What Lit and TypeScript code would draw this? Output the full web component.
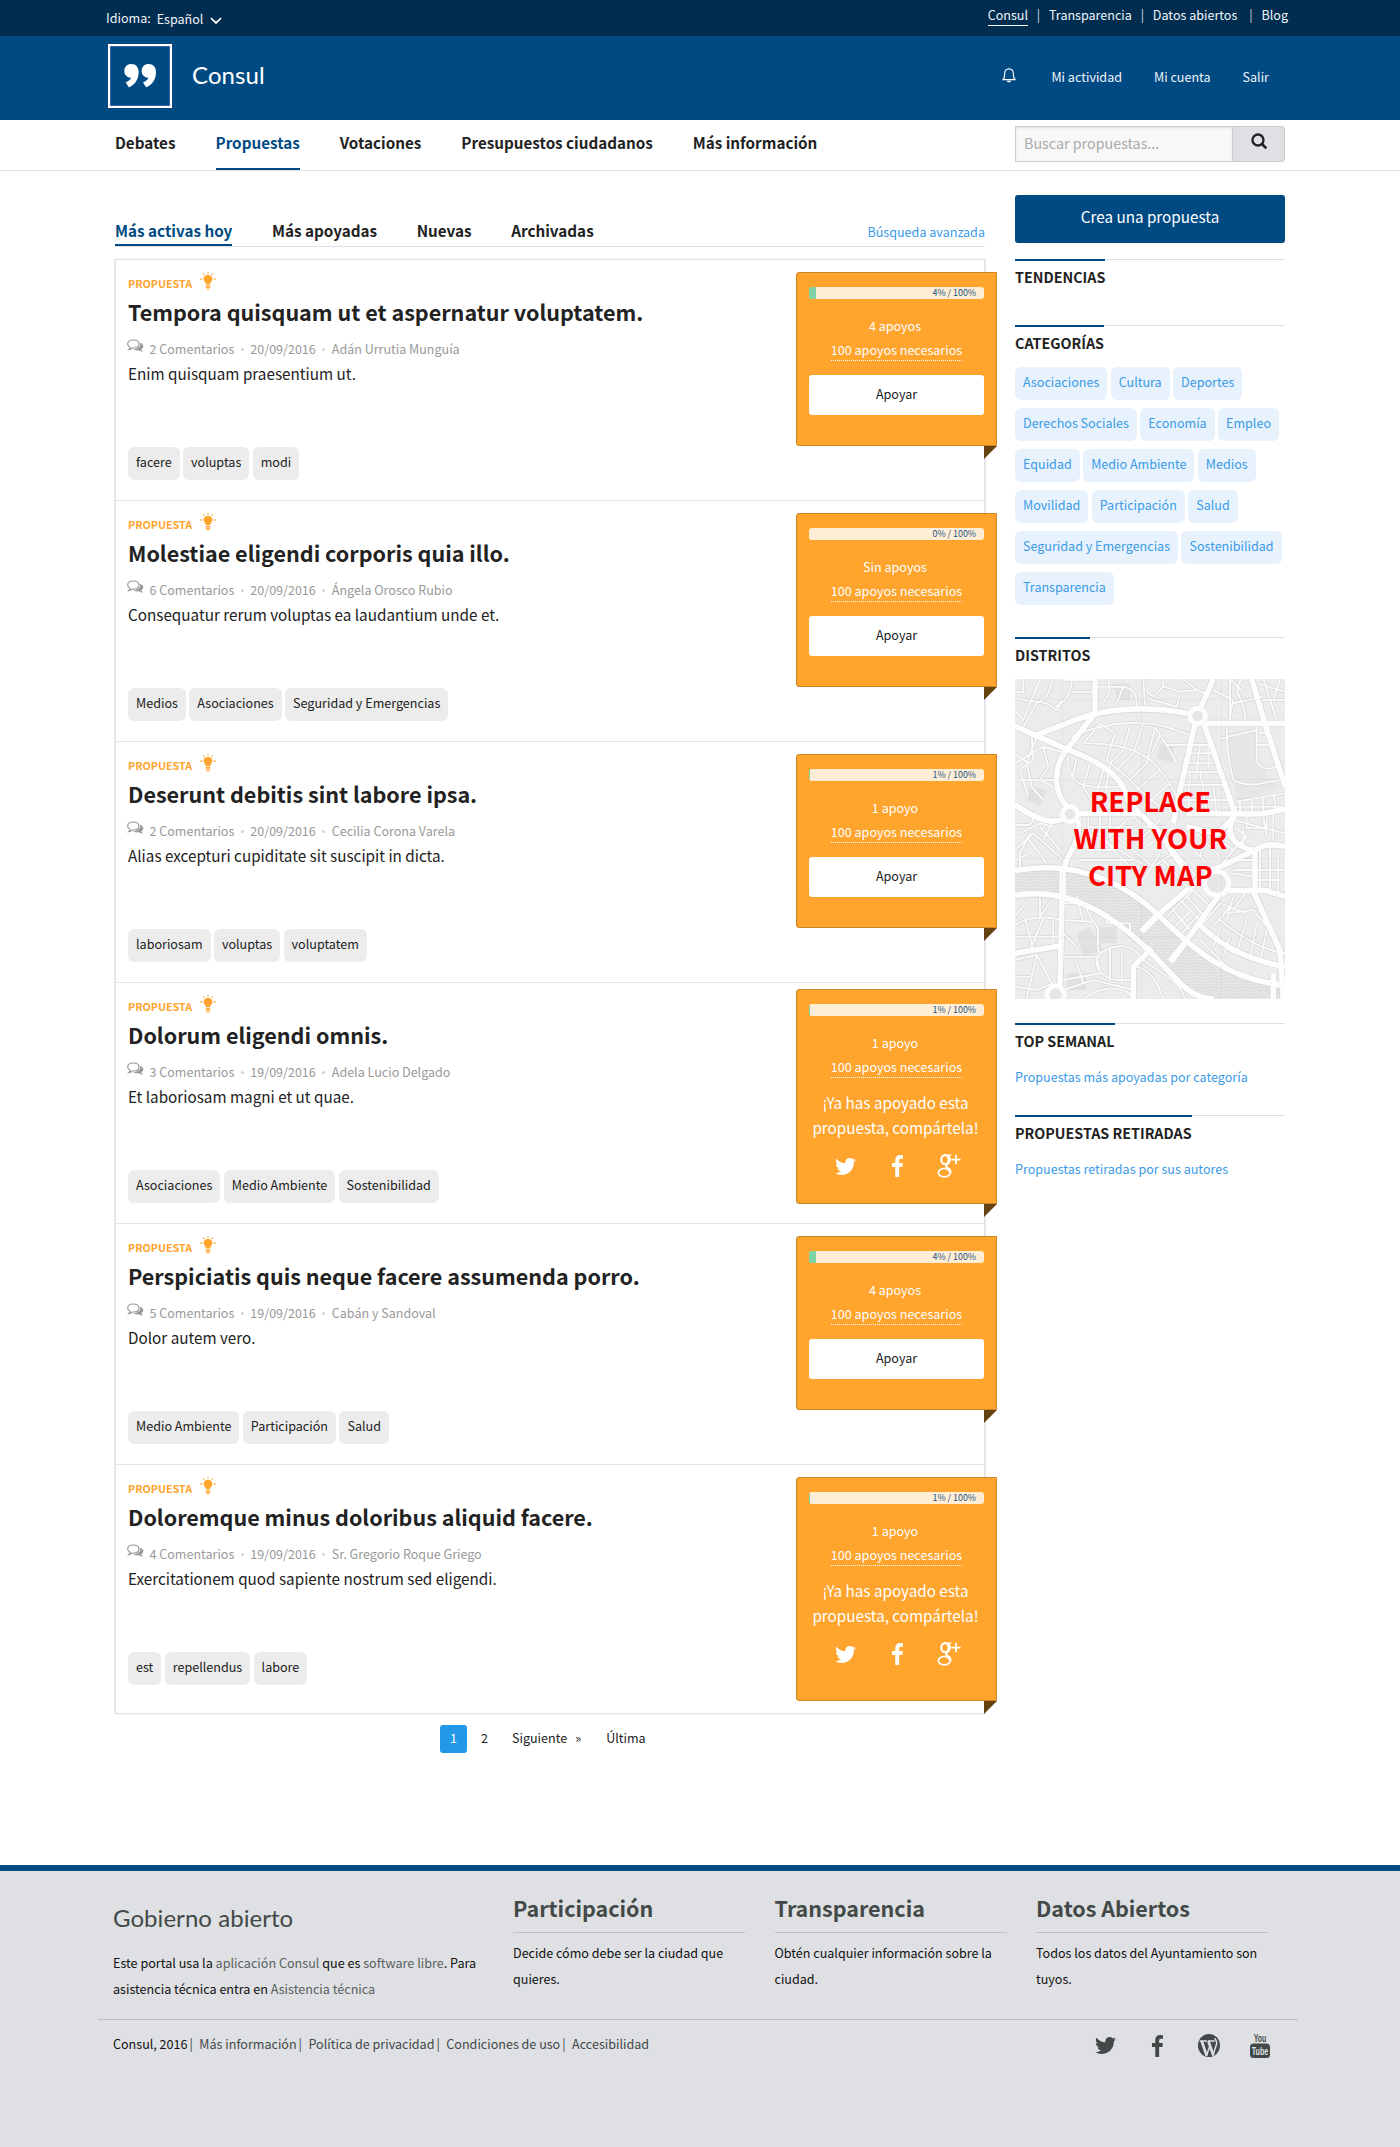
import { LitElement, html, css, svg } from "lit";
import { customElement, property } from "lit/decorators.js";

interface Proposal {
  title: string;
  comments: number;
  date: string;
  author: string;
  summary: string;
  tags: string[];
  votes: string;
  percent: number;
  voted?: "short" | "tall";
}

const proposals: Proposal[] = [
  { title: "Tempora quisquam ut et aspernatur voluptatem.", comments: 2, date: "20/09/2016", author: "Adán Urrutia Munguía", summary: "Enim quisquam praesentium ut.", tags: ["facere", "voluptas", "modi"], votes: "4 apoyos", percent: 4 },
  { title: "Molestiae eligendi corporis quia illo.", comments: 6, date: "20/09/2016", author: "Ángela Orosco Rubio", summary: "Consequatur rerum voluptas ea laudantium unde et.", tags: ["Medios", "Asociaciones", "Seguridad y Emergencias"], votes: "Sin apoyos", percent: 0 },
  { title: "Deserunt debitis sint labore ipsa.", comments: 2, date: "20/09/2016", author: "Cecilia Corona Varela", summary: "Alias excepturi cupiditate sit suscipit in dicta.", tags: ["laboriosam", "voluptas", "voluptatem"], votes: "1 apoyo", percent: 1 },
  { title: "Dolorum eligendi omnis.", comments: 3, date: "19/09/2016", author: "Adela Lucio Delgado", summary: "Et laboriosam magni et ut quae.", tags: ["Asociaciones", "Medio Ambiente", "Sostenibilidad"], votes: "1 apoyo", percent: 1, voted: "short" },
  { title: "Perspiciatis quis neque facere assumenda porro.", comments: 5, date: "19/09/2016", author: "Cabán y Sandoval", summary: "Dolor autem vero.", tags: ["Medio Ambiente", "Participación", "Salud"], votes: "4 apoyos", percent: 4 },
  { title: "Doloremque minus doloribus aliquid facere.", comments: 4, date: "19/09/2016", author: "Sr. Gregorio Roque Griego", summary: "Exercitationem quod sapiente nostrum sed eligendi.", tags: ["est", "repellendus", "labore"], votes: "1 apoyo", percent: 1, voted: "tall" },
];

const categories = [
  ["Asociaciones", "Cultura", "Deportes"],
  ["Derechos Sociales", "Economía", "Empleo"],
  ["Equidad", "Medio Ambiente", "Medios"],
  ["Movilidad", "Participación", "Salud"],
  ["Seguridad y Emergencias", "Sostenibilidad"],
  ["Transparencia"],
];

const twitter = (w: number, h: number) => html`<svg width=${w} height=${h} viewBox="108 256 1576 1280" preserveAspectRatio="none" fill="currentColor"><path d="M1684 408q-67 98-162 167 1 14 1 42 0 130-38 259.500t-115.500 248.500-184.500 210.500-258 146-323 54.500q-271 0-496-145 35 4 78 4 225 0 401-138-105-2-188-64.500t-114-159.500q33 5 61 5 43 0 85-11-112-23-185.500-111.500t-73.500-205.500v-4q68 38 146 41-66-44-105-115t-39-154q0-88 44-163 121 149 294.500 238.500t371.500 99.500q-8-38-8-74 0-134 94.500-228.500t228.500-94.500q140 0 236 102 109-21 205-78-37 115-142 178 93-10 186-50z"/></svg>`;

const facebook = (w: number, h: number) => html`<svg width=${w} height=${h} viewBox="479 0 864 1664" preserveAspectRatio="none" fill="currentColor"><path d="M1343 12v264h-157q-86 0-116 36t-30 108v189h293l-39 296h-254v759h-306v-759h-255v-296h255v-218q0-186 104-288.500t277-102.500q147 0 228 12z"/></svg>`;

const googlePlus = html`<svg width="24" height="24" viewBox="0 0 72 72" fill="none" stroke="currentColor"><ellipse cx="24" cy="17" rx="11" ry="13.500" stroke-width="6.500"/><path d="M24 3.500H43" stroke-width="4"/><path d="M33 6c9 7 6 19-1 24-6 4-7 8 0 12 4 2 7 5 8 9" stroke-width="6"/><ellipse cx="22" cy="56" rx="18" ry="12.500" stroke-width="5"/><path d="M40 56c0-8-6-11-10-13" stroke-width="8"/><path d="M43 17h28M57 3v28" stroke-width="5.500"/></svg>`;

const wordpress = html`<svg width="22" height="23" viewBox="0 0 66 66" preserveAspectRatio="none"><circle cx="33" cy="33" r="33" fill="currentColor"/><g fill="none" stroke="#dee0e3"><path d="M5 20H27M30 20H50" stroke-width="4"/><path d="M11 20L26 62M31 20L46 61" stroke-width="8"/><path d="M25 64L37 30M44 64L56 28C58 22 52 18 51 12" stroke-width="4.500"/></g></svg>`;

const youtube = html`<svg class="yt" width="20" height="25" viewBox="0 0 20 25"><text x="10" y="9" textLength="12.500" lengthAdjust="spacingAndGlyphs" fill="currentColor">You</text><rect x="0" y="10.500" width="20" height="14.500" rx="3.500" fill="currentColor"/><text x="10" y="22" textLength="16.500" lengthAdjust="spacingAndGlyphs" fill="#dee0e3">Tube</text></svg>`;

const bulb = html`<svg class="bulb" width="16" height="18" viewBox="0 0 48 54"><path d="M24 9c-9 0-14 6-13 13 1 7 6 8 6.500 15h13c.5-7 5.500-8 6.500-15 1-7-4-13-13-13z" fill="currentColor"/><path d="M17 41h14M17.500 46h13M20 51h8" stroke="currentColor" stroke-width="3.500"/><path d="M24 0v6M9 3l5 6M39 3l-5 6M0 21h8M40 21h8" stroke="currentColor" stroke-width="3" fill="none"/></svg>`;

const bubbles = html`<svg class="bubbles" width="17" height="14" viewBox="0 0 51 42"><path d="M19 3C9 3 2 8 2 15c0 5 3 8 7 10-1 3-2 5-4 7 5-1 8-3 11-5h3c10 0 17-5 17-12S29 3 19 3z" fill="none" stroke="currentColor" stroke-width="3.500"/><path d="M39 11c6 2 10 6 10 11 0 4-3 7-6 9 1 3 2 5 5 7-5 0-9-2-12-4-8 1-14-1-18-4 12 1 26-7 21-19z" fill="currentColor"/></svg>`;

/* Street network of the district map: wide avenues first, side streets after. */
const avenues = [
  "M45 318L200 388C290 420 370 465 385 545L480 640L560 760",
  "M110 345L200 310C330 255 460 260 571 282",
  "M285 177V280L195 395C155 455 165 520 203 562",
  "M640 177L600 268", "M614 310H855", "M585 312L538 520L520 610", "M612 312L705 580",
  "M755 177L795 310L855 500", "M45 555C100 590 140 615 190 598", "M232 580H420M560 580H640L705 582H780L855 568",
  "M235 598C240 680 205 690 192 745", "M45 752C190 725 340 760 470 880C570 980 680 1080 855 1096",
  "M45 826C200 800 330 880 440 985C520 1060 560 1137 640 1137", "M188 745L180 1100",
  "M705 582C670 640 700 680 765 692V815", "M765 692C790 670 830 672 855 680", "M470 888L620 760L765 690",
  "M515 1025L600 905L665 815", "M685 812H800L855 830M760 815L840 990L850 1137", "M590 905C650 970 740 1020 855 1040",
  "M45 1000L180 978", "M400 1137V1040L455 985", "M560 620L650 640L705 590", "M820 1137V1060",
];
const streets = [
  "M70 177V215H45M120 177L70 300L45 270M45 235L140 250L170 270L185 240M160 177L140 230L110 250L70 320",
  "M215 177C215 230 190 250 165 260M185 180H285M215 215H285M290 200H370C420 210 405 245 412 260M325 177L330 215L310 250M370 200L350 250",
  "M430 177L435 255M490 177V200L460 230L440 215M490 200L540 215L590 210L625 225M440 235L530 260L540 225M550 177L590 210M690 177L730 215M700 250L790 230M690 177V300M640 210L700 240L690 290M725 177C690 220 740 240 735 300",
  "M775 190L855 215M785 240H855M790 177L830 300M840 177L820 240",
  "M110 350L80 430L95 500L130 540M45 430L130 380L200 400M95 350L100 420L60 450L85 530M130 380L145 440L120 480L160 500M60 480H165M45 400L85 430",
  "M215 350C280 320 350 305 430 310C500 310 540 340 575 345M250 370C330 370 430 380 480 450C520 500 540 540 545 590M250 370L300 310L345 340M345 340L320 420L380 470M390 320L370 390L330 430M430 310L400 400L350 450M465 320L440 430L390 480M465 320L500 375H560M500 375L530 430M480 345L455 400M480 450L410 510M510 490L430 560M380 470L430 520L480 560",
  "M205 410C200 470 230 500 285 500H330M230 415L215 480M270 430L250 500L280 550M310 450L290 520M330 430L310 560M285 500L370 500",
  "M570 375H630M565 400H640M560 430H640M600 375L590 455M625 380V450M550 455H660M545 495H680M570 455L565 580M600 455L620 580M640 500L650 580M540 540H690",
  "M665 355L770 330M680 320C680 400 690 440 700 480C760 510 800 480 850 480M770 320V420C780 450 810 450 830 440M780 340H810M770 375H815M705 545L855 520M720 540V580M755 535V582M790 530V578M705 560H850M740 580V625H800V582M820 525L830 575",
  "M45 615H90L110 580M60 640L120 610L160 620M45 690L100 640L190 720M80 650L140 730M45 720L90 700M120 620L180 690M155 610L130 660M90 640L60 700V740",
  "M265 590V640L340 680L440 740M300 590V660M330 590V650L380 600M265 620H400M250 660L300 640L350 700L390 740M260 690H350M240 720H400M350 650L460 740M400 590L430 620H500M430 650L480 600M440 680L520 620M460 740L520 700L560 640M490 720L560 800M520 690L590 770M550 660L620 730M590 640L660 710M620 640L600 710M480 700L430 780",
  "M700 600L855 640M730 620V680M790 590L800 650M820 580V660M705 620L740 650L690 700M640 650L700 690L660 740M600 770L640 740M690 720H760M700 750H850M780 690V810M810 680V820M835 700V820M770 780H850M690 760L765 770",
  "M500 890L545 845L600 900M545 845L580 810L630 860M520 870L570 930M560 830L610 885M525 920L575 870M545 940L600 880M610 910L660 850L740 880M640 920L690 860M620 930L700 1000M660 900C720 950 790 990 855 1000M680 880L760 870L810 930M700 830L680 900M735 820L700 870M660 930L640 980M690 950L670 1010M740 900L710 1000M770 910L750 1020M800 930L780 1030M600 960L680 1040",
  "M45 915C100 880 160 895 190 900L280 905C310 930 280 980 300 1000C340 970 400 970 420 1010M120 835V890M85 840L45 890M155 840L120 890M75 895L100 990M130 895L90 990M160 900V980M45 950H180M190 850H250L280 905M230 830L250 905M325 880L320 910H390V950M190 1010H290L300 1060L190 1080M300 1000C270 1040 310 1090 390 1080M190 940L230 980M330 985V1080M365 1000V1080M45 1020L110 1005L160 1100M110 1005L80 1137M45 1070H90M190 1110L280 1080L400 1110M230 1030L250 1090M45 1100L110 1110L160 1090",
  "M410 1040C460 1050 480 1110 490 1137M430 1020C480 1060 540 1080 555 1137M250 1137C310 1090 380 1100 400 1137",
];
const river = "M45 752C190 725 340 760 470 880C570 980 680 1080 855 1096V1137H640C560 1137 520 1060 440 985C330 880 200 800 45 826Z";

@customElement("city-map")
class CityMap extends LitElement {
  static styles = css`
    :host { display: block; height: 320px; }
    svg { display: block; }
    text { font: 700 82px "Noto Sans CJK JP", sans-serif; fill: #f00; text-anchor: middle; }
  `;
  render() {
    return html`<svg width="270" height="320" viewBox="45 177 810 960">
      <defs>
        <pattern id="waves" width="16" height="9" patternUnits="userSpaceOnUse"><path d="M0 5q4-5 8 0t8 0" fill="none" stroke="#cfcfcf" stroke-width="2"/></pattern>
      </defs>
      <rect x="45" y="177" width="810" height="960" fill="#ececec"/>
      <path d="M680 340L765 325V430L840 500L710 545Z" fill="#e6e6e6"/>
      <path d="M230 940l40-20 40 70-60 20zM200 1060h60v50h-60zM480 370l40 10v50l-50-15zM340 190h50v50h-40zM90 500l50 10-20 50-40-20zM300 920h50v50h-50z" fill="#e1e1e1"/>
      <path d=${river} fill="#e8e8e8"/>
      <path d=${river} fill="url(#waves)"/>
      <g fill="none" stroke="#d2d2d2" stroke-width="9.500">${streets.map((d) => svg`<path d=${d}/>`)}</g>
      <g fill="none" stroke="#d4d4d4" stroke-width="21">${avenues.map((d) => svg`<path d=${d}/>`)}</g>
      <g fill="none" stroke="#fafafa" stroke-width="6">${streets.map((d) => svg`<path d=${d}/>`)}</g>
      <path d="M425 935L478 880M510 1025L550 975M188 740V830" stroke="#fdfdfd" stroke-width="18"/>
      <g fill="none" stroke="#fdfdfd" stroke-width="17">${avenues.map((d) => svg`<path d=${d}/>`)}</g>
      <g fill="#e6e6e6" stroke="#fdfdfd" stroke-width="14"><circle cx="593" cy="288" r="23"/><circle cx="210" cy="582" r="23"/><circle cx="650" cy="790" r="36"/><circle cx="167" cy="1124" r="26"/></g>
      <path d="M187 177V1137M425 177V1137M664 177V1137M45 238H855M45 478H855M45 715H855M45 952H855" stroke="#000" stroke-opacity=".06" stroke-width="2"/>
      <text x="451" y="577">REPLACE</text>
      <text x="451" y="687">WITH YOUR</text>
      <text x="451" y="797">CITY MAP</text>
    </svg>`;
  }
}

@customElement("support-card")
class SupportCard extends LitElement {
  @property({ attribute: false }) proposal!: Proposal;
  static styles = css`
    :host { display: block; }
    .card { position: relative; box-sizing: border-box; width: 201px; height: 174px; border: 1px solid #cc8425; border-radius: 3px 0 0 3px; background: #ffa42d; padding: 14px 12px 0; color: #fff; text-align: center; font-size: 12.550px; line-height: 24px; }
    .card.short { height: 215px; }
    .card.tall { height: 224px; }
    .card::after { content: ""; position: absolute; right: -1px; top: 100%; margin-top: 1px; border-top: 13px solid #664212; border-right: 13px solid transparent; }
    .bar { display: flex; height: 12px; border-radius: 3px; background: #ffedd5; overflow: hidden; }
    .fill { background: #7fd3a6; height: 12px; }
    .label { margin-left: auto; padding-right: 8px; font-size: 8.900px; line-height: 11px; color: #1b5483; }
    .votes { margin-top: 15px; padding-right: 3px; }
    .needed { display: inline-block; box-sizing: border-box; height: 23px; border-bottom: 1px dotted #fff; }
    .needed-row { height: 24px; display: flex; justify-content: center; }
    .button { margin-top: 13px; height: 40px; line-height: 37px; border-radius: 3px; background: #fff; color: #222; }
    .share { margin: 11px -5px 0 -7px; font-size: 15.240px; line-height: 24.500px; }
    .icons { display: flex; height: 24px; margin-top: 15px; align-items: center; }
    .icons svg { display: block; }
    .i1 { margin-left: 26px; }
    .i2 { margin-left: 36px; }
    .i3 { margin-left: 34px; }
  `;
  render() {
    const p = this.proposal;
    return html`<div class="card ${p.voted ?? ""}">
      <div class="bar"><div class="fill" style="width:${p.percent === 4 ? 7 : p.percent ? 0.6 : 0}px"></div><span class="label">${p.percent}% / 100%</span></div>
      <div class="votes">${p.votes}</div>
      <div class="needed-row"><span class="needed">100 apoyos necesarios</span></div>
      ${p.voted
        ? html`<div class="share">¡Ya has apoyado esta<br />propuesta, compártela!</div>
            <div class="icons"><span class="i1">${twitter(21, 17)}</span><span class="i2">${facebook(11, 22)}</span><span class="i3">${googlePlus}</span></div>`
        : html`<div class="button">Apoyar</div>`}
    </div>`;
  }
}

@customElement("proposal-item")
class ProposalItem extends LitElement {
  @property({ attribute: false }) proposal!: Proposal;
  static styles = css`
    :host { display: block; }
    .item { display: flex; justify-content: space-between; box-sizing: border-box; height: 241px; border-bottom: 1px solid #e3e4e7; padding: 0 0 0 12px; }
    .item.tall { height: 249px; }
    .text { padding-top: 13px; }
    .side { margin: 12px -13px 0 0; }
    .short .side { margin-top: 6px; }
    .kind { display: flex; align-items: center; height: 20px; color: #ffa42d; font-weight: 700; font-size: 10.750px; }
    .bulb { margin: -4px 0 0 8px; }
    .title { margin: 4px 0 0; font-size: 21.550px; line-height: 30px; font-weight: 700; color: #222; white-space: nowrap; }
    .meta { display: flex; align-items: center; height: 20px; margin-top: 11px; font-size: 12.540px; color: #999; }
    .bubbles { margin: -4px 5.500px 0 -1px; }
    .dot { width: 3px; height: 3px; border-radius: 50%; background: #d2d2d2; margin: 2px 6.500px 0; }
    .summary { margin-top: 3px; line-height: 24px; font-size: 15.260px; color: #222; }
    .tags { display: flex; gap: 3.400px; margin-top: 62px; }
    .tag { height: 29px; line-height: 29px; padding: 0 8px 4px; border-radius: 6px; background: #ececec; font-size: 12.570px; color: #222; }
  `;
  render() {
    const p = this.proposal;
    return html`<div class="item ${p.voted ?? ""}">
      <div class="text">
        <div class="kind">PROPUESTA ${bulb}</div>
        <h3 class="title">${p.title}</h3>
        <div class="meta">${bubbles}<span>${p.comments} Comentarios</span><i class="dot"></i><span>${p.date}</span><i class="dot"></i><span>${p.author}</span></div>
        <div class="summary">${p.summary}</div>
        <div class="tags">${p.tags.map((t) => html`<span class="tag">${t}</span>`)}</div>
      </div>
      <support-card class="side" .proposal=${p}></support-card>
    </div>`;
  }
}

@customElement("app-root")
class AppRoot extends LitElement {
  static styles = css`
    :host { display: block; width: 1400px; background: #fff; color: #222; font-family: "Noto Sans CJK JP", "Source Sans Pro", sans-serif; font-size: 12.550px; }
    svg { display: block; }
    .top { display: flex; justify-content: space-between; height: 36px; box-sizing: border-box; padding: 0 112px 0 106px; background: #002d50; color: #f2f5f8; }
    .lang { display: flex; line-height: 20px; padding-top: 8px; }
    .lang .value { margin: 1px 7px 0 6px; }
    .lang svg { margin-top: 9px; }
    .sites { display: flex; padding-top: 5px; line-height: 20px; }
    .current { height: 20px; border-bottom: 1px solid #fff; }
    .bar-sep { margin: 0 8.800px; opacity: .8; }
    .bar-sep.wide { margin-left: 12px; }
    .header { display: flex; align-items: flex-start; justify-content: space-between; height: 84px; box-sizing: border-box; padding: 8px 131px 0 108px; background: #004a83; color: #fff; }
    .brand { display: flex; }
    .brand-name { margin-left: 20px; line-height: 62px; font-family: Lato, sans-serif; font-size: 24px; letter-spacing: .1px; }
    .account { display: flex; line-height: 20px; padding-top: 23px; color: #f0f5f9; }
    .account svg { margin: 0 35px 0 0; }
    .account span + span { margin-left: 32px; }
    .nav { display: flex; justify-content: space-between; height: 50px; border-bottom: 1px solid #dee0e3; padding: 0 115px; font-size: 14.320px; }
    .menu { display: flex; gap: 40px; font-weight: 700; line-height: 44px; font-size: 15.230px; }
    .menu span { box-sizing: border-box; height: 50px; }
    .menu .on { color: #004a83; border-bottom: 2px solid #004a83; }
    .search { display: flex; width: 270px; height: 36px; margin-top: 6px; box-sizing: border-box; }
    .field { width: 217px; box-sizing: border-box; border: 1px solid #ccc; border-right: 0; background: #f8f8f8; padding-left: 8px; line-height: 32px; color: #aaa; box-shadow: inset 0 1px 2px rgba(0,0,0,.1); }
    .go { width: 53px; box-sizing: border-box; border: 1px solid #ccc; border-radius: 0 3px 3px 0; background: #dee0e3; padding: 6px 0 0 17.500px; }
    .body { display: grid; grid-template-columns: 870px 270px; column-gap: 30px; padding: 0 115px; height: 1694px; box-sizing: border-box; }
    .tabs { display: flex; margin-top: 45px; height: 30px; border-bottom: 1px solid #dee0e3; line-height: 29px; font-weight: 700; font-size: 15.260px; }
    .tabs span { height: 28px; margin-right: 39.600px; }
    .tabs .on { color: #004a83; border-bottom: 2px solid #004a83; }
    .tabs .link { margin: 1px 0 0 auto; font-weight: 400; font-size: 12.590px; }
    .link { color: #3a9be8; }
    .list { margin-top: 12px; border: 1px solid #dee0e3; border-bottom: 0; box-shadow: -1px 0 1px #eceef1, 1px 0 1px #eceef1; box-sizing: border-box; }
    .pages { display: flex; margin: 11px 0 0 325px; height: 28px; line-height: 26px; }
    .page { background: #2199e8; color: #fff; width: 27px; text-align: center; border-radius: 3px; }
    .p2 { margin-left: 14px; }
    .pn { margin-left: 24px; }
    .pr { margin-left: 8px; }
    .pl { margin-left: 25px; }
    .side { padding-top: 24px; }
    .create { height: 48px; line-height: 43px; background: #004a83; color: #fff; text-align: center; border-radius: 3px; font-size: 15.240px; margin-bottom: 16px; }
    .block { border-top: 1px solid #dee0e3; }
    .head { display: inline-block; margin-top: -1px; border-top: 2px solid #004a83; font-size: 14.310px; font-weight: 700; line-height: 24px; padding-top: 4px; height: 36px; vertical-align: top; text-transform: uppercase; }
    .b1 { height: 65px; } .b2 { height: 311px; } .b3 { height: 385px; } .b4 { height: 91px; }
    .rows { display: flex; flex-direction: column; gap: 8px; }
    .row { display: flex; gap: 3.400px; }
    .cat { height: 30px; line-height: 30px; padding: 0 8px 3px; border-radius: 6px; background: #e7f2fc; color: #3a9be8; font-size: 12.560px; }
    .block .link { margin-top: 2px; line-height: 20px; font-size: 12.570px; }
    .footer { height: 282px; box-sizing: border-box; border-top: 6px solid #004a83; background: #dee0e3; padding: 0 102px 0 98px; color: #111; }
    .cols { display: grid; grid-template-columns: 400px 261.500px 261.500px 232px; height: 148px; padding-left: 15px; }
    .cols h2 { margin: 31px 0 0; font: 400 24px/32px Lato, sans-serif; color: #434948; letter-spacing: .05px; }
    .cols p { margin: 0; line-height: 26px; }
    .intro { margin-top: 16px !important; font-size: 12.600px; }
    .soft { color: #5a5f60; }
    .col h3 { margin: 21px 0 0; height: 41px; line-height: 32px; font-size: 21.500px; color: #434948; border-bottom: 1px solid #bcbfc2; width: 232px; box-sizing: border-box; }
    .col p { margin-top: 7px; width: 234px; white-space: nowrap; }
    .legal { display: flex; justify-content: space-between; border-top: 1px solid #bcbfc2; padding: 13px 28px 0 15px; color: #434948; }
    .links { line-height: 22px; }
    .links b { font-weight: 400; color: #111; }
    .links i { font-style: normal; margin: 0 3.700px 0 2px; }
    .social { display: flex; align-items: center; height: 25px; }
    .social svg { color: #434948; overflow: visible; }
    .facebook { margin-left: 36px; }
    .wordpress { margin-left: 35px; }
    .youtube { margin-left: 30px; }
    .yt text { font: 700 11.500px "Liberation Sans", sans-serif; text-anchor: middle; }
  `;

  render() {
    return html`
      <div class="top">
        <div class="lang"><span>Idioma:</span><span class="value">Español</span>
          <svg width="12" height="8" viewBox="0 0 12 8"><path d="M1 1.200L6 6L11 1.200" fill="none" stroke="#fff" stroke-width="1.800"/></svg></div>
        <div class="sites"><span class="current">Consul</span><span class="bar-sep">|</span><span>Transparencia</span><span class="bar-sep">|</span><span>Datos abiertos</span><span class="bar-sep wide">|</span><span>Blog</span></div>
      </div>
      <div class="header">
        <div class="brand">
          <svg width="64" height="64" viewBox="54 132 192 192"><rect x="57" y="135" width="186" height="186" fill="none" stroke="#fff" stroke-width="7"/><g fill="#fff"><path d="M103 213C103 200 112 192 124 192C138 192 146 202 146 216C146 238 134 256 116 262L107 247C116 243 121 239 123 233C111 233 103 225 103 213Z"/><path d="M155 213C155 200 164 192 176 192C190 192 198 202 198 216C198 238 186 256 168 262L159 247C168 243 173 239 175 233C163 233 155 225 155 213Z"/></g></svg>
          <span class="brand-name">Consul</span>
        </div>
        <div class="account">
          <svg width="14" height="16" viewBox="0 0 42 48"><path d="M3 38C8 33 8 27 8 20C8 10 13 6 21 6S34 10 34 20C34 27 34 33 39 38Z" fill="none" stroke="#fff" stroke-width="3.500"/><path d="M21 1v4M15 42h12c-1 4-11 4-12 0z" stroke="#fff" fill="#fff" stroke-width="2"/></svg>
          <span>Mi actividad</span><span>Mi cuenta</span><span>Salir</span>
        </div>
      </div>
      <div class="nav">
        <div class="menu"><span>Debates</span><span class="on">Propuestas</span><span>Votaciones</span><span>Presupuestos ciudadanos</span><span>Más información</span></div>
        <div class="search"><div class="field">Buscar propuestas...</div><div class="go"><svg width="17" height="17" viewBox="0 0 51 51"><circle cx="21" cy="21" r="16.500" fill="none" stroke="#222" stroke-width="7"/><path d="M33 33L46 46" stroke="#222" stroke-width="8"/></svg></div></div>
      </div>
      <div class="body">
        <div>
          <div class="tabs"><span class="on">Más activas hoy</span><span>Más apoyadas</span><span>Nuevas</span><span>Archivadas</span><span class="link">Búsqueda avanzada</span></div>
          <div class="list">${proposals.map((p) => html`<proposal-item .proposal=${p}></proposal-item>`)}</div>
          <div class="pages"><span class="page">1</span><span class="p2">2</span><span class="pn">Siguiente</span><span class="pr">»</span><span class="pl">Última</span></div>
        </div>
        <div class="side">
          <div class="create">Crea una propuesta</div>
          <div class="block b1"><span class="head">Tendencias</span></div>
          <div class="block b2"><span class="head">Categorías</span>
            <div class="rows">${categories.map((r) => html`<div class="row">${r.map((c) => html`<span class="cat">${c}</span>`)}</div>`)}</div></div>
          <div class="block b3"><span class="head">Distritos</span><city-map></city-map></div>
          <div class="block b4"><span class="head">Top semanal</span><div class="link">Propuestas más apoyadas por categoría</div></div>
          <div class="block"><span class="head">Propuestas retiradas</span><div class="link">Propuestas retiradas por sus autores</div></div>
        </div>
      </div>
      <div class="footer">
        <div class="cols">
          <div><h2>Gobierno abierto</h2>
            <p class="intro">Este portal usa la <span class="soft">aplicación Consul</span> que es <span class="soft">software libre</span>. Para<br />asistencia técnica entra en <span class="soft">Asistencia técnica</span></p></div>
          <div class="col"><h3>Participación</h3><p>Decide cómo debe ser la ciudad que<br />quieres.</p></div>
          <div class="col"><h3>Transparencia</h3><p>Obtén cualquier información sobre la<br />ciudad.</p></div>
          <div class="col"><h3>Datos Abiertos</h3><p>Todos los datos del Ayuntamiento son<br />tuyos.</p></div>
        </div>
        <div class="legal">
          <div class="links"><b>Consul, 2016</b><i>|</i> Más información<i>|</i> Política de privacidad<i>|</i> Condiciones de uso<i>|</i> Accesibilidad</div>
          <div class="social"><span>${twitter(21, 17)}</span><span class="facebook">${facebook(11, 22)}</span><span class="wordpress">${wordpress}</span><span class="youtube">${youtube}</span></div>
        </div>
      </div>
    `;
  }
}
